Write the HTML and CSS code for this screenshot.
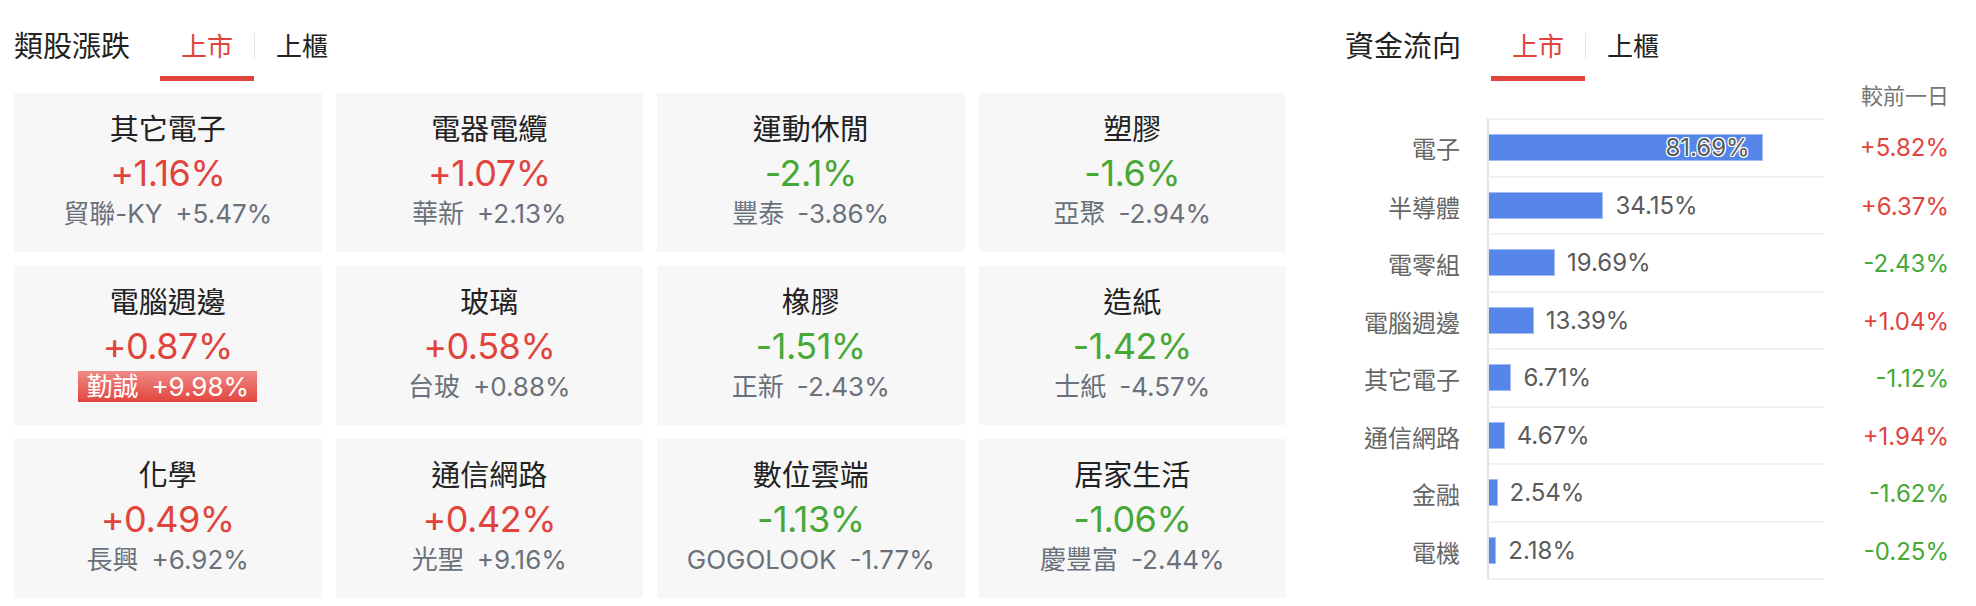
FILE: index.html
```html
<!DOCTYPE html>
<html lang="zh-Hant">
<head>
    <meta charset="UTF-8">
    <meta name="viewport" content="width=device-width, initial-scale=1.0">
    <title>類股漲跌 / 資金流向</title>
    <link rel="stylesheet" href="styles.css">
</head>
<body>
<div class="page">

    <!-- 類股漲跌 -->
    <section class="sectors">
        <div class="head">
            <div class="head-title">類股漲跌</div>
            <div class="tab active">上市</div>
            <div class="tab-sep"></div>
            <div class="tab">上櫃</div>
        </div>

        <div class="grid">
            <div class="card">
                <div class="card-name">其它電子</div>
                <div class="card-pct up">+1.16%</div>
                <div class="card-lead"><span>貿聯-KY</span><span>+5.47%</span></div>
            </div>
            <div class="card">
                <div class="card-name">電器電纜</div>
                <div class="card-pct up">+1.07%</div>
                <div class="card-lead"><span>華新</span><span>+2.13%</span></div>
            </div>
            <div class="card">
                <div class="card-name">運動休閒</div>
                <div class="card-pct down">-2.1%</div>
                <div class="card-lead"><span>豐泰</span><span>-3.86%</span></div>
            </div>
            <div class="card">
                <div class="card-name">塑膠</div>
                <div class="card-pct down">-1.6%</div>
                <div class="card-lead"><span>亞聚</span><span>-2.94%</span></div>
            </div>

            <div class="card">
                <div class="card-name">電腦週邊</div>
                <div class="card-pct up">+0.87%</div>
                <div class="card-lead limit"><span>勤誠</span><span>+9.98%</span></div>
            </div>
            <div class="card">
                <div class="card-name">玻璃</div>
                <div class="card-pct up">+0.58%</div>
                <div class="card-lead"><span>台玻</span><span>+0.88%</span></div>
            </div>
            <div class="card">
                <div class="card-name">橡膠</div>
                <div class="card-pct down">-1.51%</div>
                <div class="card-lead"><span>正新</span><span>-2.43%</span></div>
            </div>
            <div class="card">
                <div class="card-name">造紙</div>
                <div class="card-pct down">-1.42%</div>
                <div class="card-lead"><span>士紙</span><span>-4.57%</span></div>
            </div>

            <div class="card">
                <div class="card-name">化學</div>
                <div class="card-pct up">+0.49%</div>
                <div class="card-lead"><span>長興</span><span>+6.92%</span></div>
            </div>
            <div class="card">
                <div class="card-name">通信網路</div>
                <div class="card-pct up">+0.42%</div>
                <div class="card-lead"><span>光聖</span><span>+9.16%</span></div>
            </div>
            <div class="card">
                <div class="card-name">數位雲端</div>
                <div class="card-pct down">-1.13%</div>
                <div class="card-lead"><span>GOGOLOOK</span><span>-1.77%</span></div>
            </div>
            <div class="card">
                <div class="card-name">居家生活</div>
                <div class="card-pct down">-1.06%</div>
                <div class="card-lead"><span>慶豐富</span><span>-2.44%</span></div>
            </div>
        </div>
    </section>

    <!-- 資金流向 -->
    <section class="flow">
        <div class="head">
            <div class="head-title">資金流向</div>
            <div class="tab active">上市</div>
            <div class="tab-sep"></div>
            <div class="tab">上櫃</div>
        </div>

        <div class="flow-sub">較前一日</div>

        <div class="chart">
            <div class="row">
                <div class="row-label">電子</div>
                <div class="row-bar"><div class="bar inside" style="width:81.69%"><span class="bar-val">81.69%</span></div></div>
                <div class="row-chg up">+5.82%</div>
            </div>
            <div class="row">
                <div class="row-label">半導體</div>
                <div class="row-bar"><div class="bar" style="width:34.15%"></div><span class="bar-val">34.15%</span></div>
                <div class="row-chg up">+6.37%</div>
            </div>
            <div class="row">
                <div class="row-label">電零組</div>
                <div class="row-bar"><div class="bar" style="width:19.69%"></div><span class="bar-val">19.69%</span></div>
                <div class="row-chg down">-2.43%</div>
            </div>
            <div class="row">
                <div class="row-label">電腦週邊</div>
                <div class="row-bar"><div class="bar" style="width:13.39%"></div><span class="bar-val">13.39%</span></div>
                <div class="row-chg up">+1.04%</div>
            </div>
            <div class="row">
                <div class="row-label">其它電子</div>
                <div class="row-bar"><div class="bar" style="width:6.71%"></div><span class="bar-val">6.71%</span></div>
                <div class="row-chg down">-1.12%</div>
            </div>
            <div class="row">
                <div class="row-label">通信網路</div>
                <div class="row-bar"><div class="bar" style="width:4.67%"></div><span class="bar-val">4.67%</span></div>
                <div class="row-chg up">+1.94%</div>
            </div>
            <div class="row">
                <div class="row-label">金融</div>
                <div class="row-bar"><div class="bar" style="width:2.54%"></div><span class="bar-val">2.54%</span></div>
                <div class="row-chg down">-1.62%</div>
            </div>
            <div class="row">
                <div class="row-label">電機</div>
                <div class="row-bar"><div class="bar" style="width:2.18%"></div><span class="bar-val">2.18%</span></div>
                <div class="row-chg down">-0.25%</div>
            </div>
        </div>
    </section>

</div>
</body>
</html>
```

FILE: styles.css
```css
body {
    margin: 0;
    background: #fff;
    font-family: Inter, "Noto Sans CJK TC", sans-serif;
    color: #222;
}

.page {
    display: flex;
    gap: 59px;
    padding: 0 27px 0 14px;
}

.sectors {
    width: 1272px;
}

.flow {
    flex: 1;
}

/* Title + tabs */
.head {
    display: flex;
    align-items: flex-start;
    padding-top: 26px;
}

.head-title {
    font-size: 29px;
    line-height: 41px;
    color: #222;
    margin-right: 30px;
}

.tab {
    font-size: 26px;
    line-height: 41px;
    padding: 0 21px 9px;
    border-bottom: 5px solid transparent;
    color: #222;
    cursor: pointer;
}

.tab.active {
    color: #e0443d;
    border-bottom-color: #e0443d;
}

.tab-sep {
    width: 1px;
    height: 26px;
    margin-top: 7px;
    background: #e6e6e6;
}

.up {
    color: #e0443d;
}

.down {
    color: #47a836;
}

/* Sector cards */
.grid {
    display: grid;
    grid-template-columns: repeat(4, 1fr);
    gap: 14px;
    margin-top: 12px;
}

.card {
    height: 159px;
    box-sizing: border-box;
    padding-top: 16px;
    background: #f7f7f7;
    display: flex;
    flex-direction: column;
    align-items: center;
}

.card-name {
    font-size: 29px;
    line-height: 42px;
    color: #222;
}

.card-pct {
    font-size: 36px;
    line-height: 44px;
    letter-spacing: -0.5px;
}

.card-lead {
    display: flex;
    gap: 13px;
    font-size: 26px;
    line-height: 37px;
    color: #6b717b;
}

/* limit-up stock */
.card-lead.limit {
    margin-top: 3px;
    padding: 0 8px;
    line-height: 31px;
    color: #fff;
    background: linear-gradient(#ef8a86, #e3453d);
}

/* Money flow chart */
.flow-sub {
    text-align: right;
    font-size: 22px;
    line-height: 30px;
    color: #777;
}

.chart {
    margin-top: 7px;
}

.row {
    display: grid;
    grid-template-columns: 142px 337px 1fr;
    height: 57.5px;
}

.row:first-child {
    height: 59.5px;
}

.row-label {
    display: flex;
    align-items: center;
    justify-content: flex-end;
    padding-right: 27px;
    font-size: 24px;
    color: #666;
}

.row-bar {
    display: flex;
    align-items: center;
    border-left: 2px solid #e2e2e2;
    border-bottom: 2px solid #f1f1f1;
}

.row:first-child .row-bar {
    border-top: 2px solid #f1f1f1;
}

.bar {
    height: 27px;
    box-sizing: border-box;
    background: #5686ea;
    border: 1px solid #a3bcf3;
    border-left: none;
}

.bar-val {
    margin-left: 12px;
    font-size: 24px;
    line-height: 27px;
    color: #5b5b5b;
}

.bar.inside {
    display: flex;
    justify-content: flex-end;
}

.bar.inside .bar-val {
    margin: -1px 12px 0 0;
    text-shadow: 1px 0 #fff, -1px 0 #fff, 0 1px #fff, 0 -1px #fff,
                 1px 1px #fff, -1px -1px #fff, 1px -1px #fff, -1px 1px #fff;
}

.row-chg {
    display: flex;
    align-items: center;
    justify-content: flex-end;
    font-size: 24px;
}
```
